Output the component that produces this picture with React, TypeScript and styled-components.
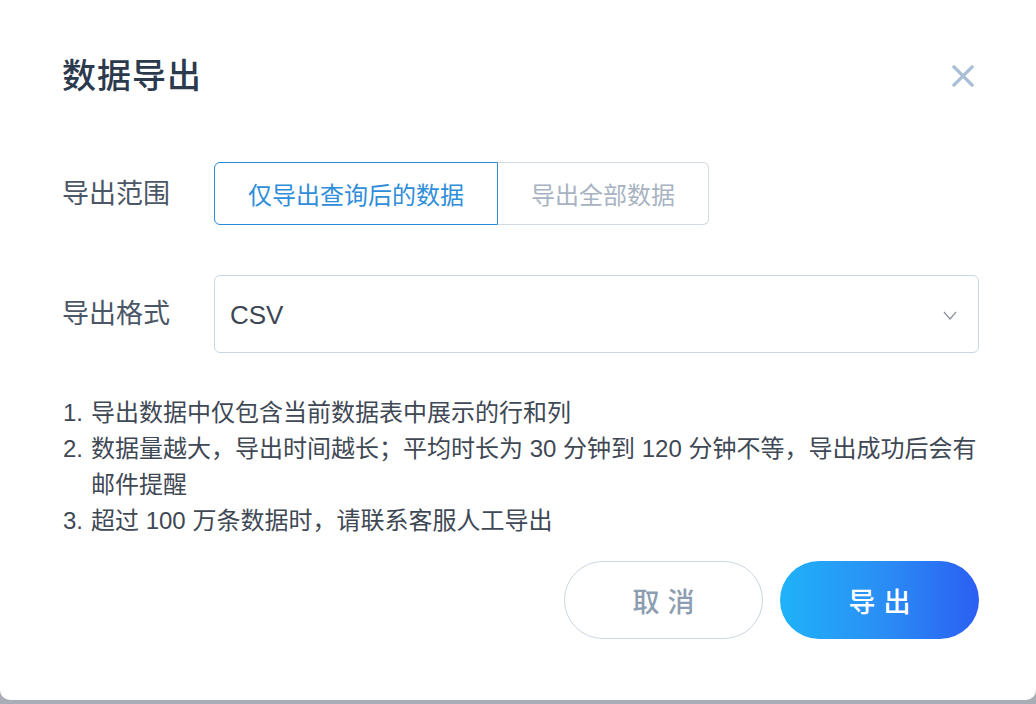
import styled, { createGlobalStyle } from 'styled-components'

const GlobalStyle = createGlobalStyle`
  html, body {
    margin: 0;
    padding: 0;
    background: #a9adb5;
  }
  body {
    font-family: "Liberation Sans", "Noto Sans CJK SC", sans-serif;
    -webkit-font-smoothing: antialiased;
  }
`

const Dialog = styled.div`
  box-sizing: border-box;
  width: 1036px;
  height: 700px;
  background: #ffffff;
  border-radius: 0 0 10px 10px;
  padding: 52px 57px 0 62px;
  display: flex;
  flex-direction: column;
`

const Header = styled.div`
  display: flex;
  align-items: center;
  justify-content: space-between;
  height: 48px;
`

const Title = styled.h1`
  margin: 0;
  font-size: 34px;
  line-height: 48px;
  font-weight: 500;
  color: #2c3a4d;
  letter-spacing: 1px;
`

const CloseButton = styled.button`
  border: none;
  background: none;
  padding: 0;
  margin-right: 4px;
  width: 24px;
  height: 24px;
  display: flex;
  align-items: center;
  justify-content: center;
  cursor: pointer;
`

const FormRow = styled.div<{ top: number }>`
  display: flex;
  align-items: center;
  margin-top: ${p => p.top}px;
`

const Label = styled.div`
  width: 152px;
  flex-shrink: 0;
  font-size: 27px;
  line-height: 36px;
  color: #4b5667;
`

const Segmented = styled.div`
  display: flex;
`

const SegButton = styled.button<{ active: boolean }>`
  box-sizing: border-box;
  height: 63px;
  padding: 0 33px;
  font-family: inherit;
  font-size: 24px;
  background: #ffffff;
  cursor: pointer;
  color: ${p => p.active ? '#2f8ed9' : '#a8b3c1'};
  border: 1.5px solid ${p => p.active ? '#2a8ad8' : '#d3d9e0'};
  ${p => p.active
    ? 'border-radius: 6px 0 0 6px;'
    : 'border-radius: 0 6px 6px 0; border-left: none;'}
`

const Select = styled.div`
  box-sizing: border-box;
  flex: 1;
  height: 78px;
  border: 1.5px solid #cbd7e3;
  border-radius: 6px;
  display: flex;
  align-items: center;
  justify-content: space-between;
  padding: 2px 21px 0 15px;
  font-size: 26px;
  color: #3d4653;
`

const Notes = styled.ol`
  list-style: none;
  margin: 42px 0 0;
  padding: 0;
  width: 924px;
  font-size: 24px;
  line-height: 36px;
  color: #3f4855;
`

const Note = styled.li`
  display: grid;
  grid-template-columns: 29px 1fr;
`

const NoteNum = styled.span`
  padding-left: 1px;
`

const Footer = styled.div`
  display: flex;
  justify-content: flex-end;
  gap: 17px;
  margin-top: 22px;
`

const ActionButton = styled.button<{ primary?: boolean }>`
  box-sizing: border-box;
  width: 199px;
  height: 78px;
  border-radius: 39px;
  font-family: inherit;
  font-size: 27px;
  font-weight: 500;
  letter-spacing: 8px;
  text-indent: 8px;
  cursor: pointer;
  color: ${p => p.primary ? '#ffffff' : '#8d9db1'};
  border: ${p => p.primary ? 'none' : '1.5px solid #cbd6e2'};
  background: ${p => p.primary
    ? 'linear-gradient(90deg, #1fb2f9 0%, #2a8ff5 50%, #2b5ff2 100%)'
    : '#ffffff'};
`

const notes = [
  '导出数据中仅包含当前数据表中展示的行和列',
  '数据量越大，导出时间越长；平均时长为 30 分钟到 120 分钟不等，导出成功后会有邮件提醒',
  '超过 100 万条数据时，请联系客服人工导出',
]

export default function App() {
  return <>
    <GlobalStyle />
    <Dialog>
      <Header>
        <Title>数据导出</Title>
        <CloseButton aria-label="关闭">
          <svg width="22" height="22" viewBox="0 0 22 22">
            <path d="M2 2 L20 20 M20 2 L2 20" stroke="#a8bfd5" strokeWidth="3.2" strokeLinecap="square" />
          </svg>
        </CloseButton>
      </Header>

      <FormRow top={62}>
        <Label>导出范围</Label>
        <Segmented>
          <SegButton active={ true }>仅导出查询后的数据</SegButton>
          <SegButton active={ false }>导出全部数据</SegButton>
        </Segmented>
      </FormRow>

      <FormRow top={50}>
        <Label>导出格式</Label>
        <Select>
          <span>CSV</span>
          <svg width="14" height="9" viewBox="0 0 14 9">
            <path d="M1 1 L7 8 L13 1" fill="none" stroke="#8b929c" strokeWidth="1.2" />
          </svg>
        </Select>
      </FormRow>

      <Notes>
        { notes.map((n, i) =>
          <Note key={ i }>
            <NoteNum>{ i + 1 }.</NoteNum>
            <span>{ n }</span>
          </Note>
        ) }
      </Notes>

      <Footer>
        <ActionButton>取消</ActionButton>
        <ActionButton primary>导出</ActionButton>
      </Footer>
    </Dialog>
  </>
}
